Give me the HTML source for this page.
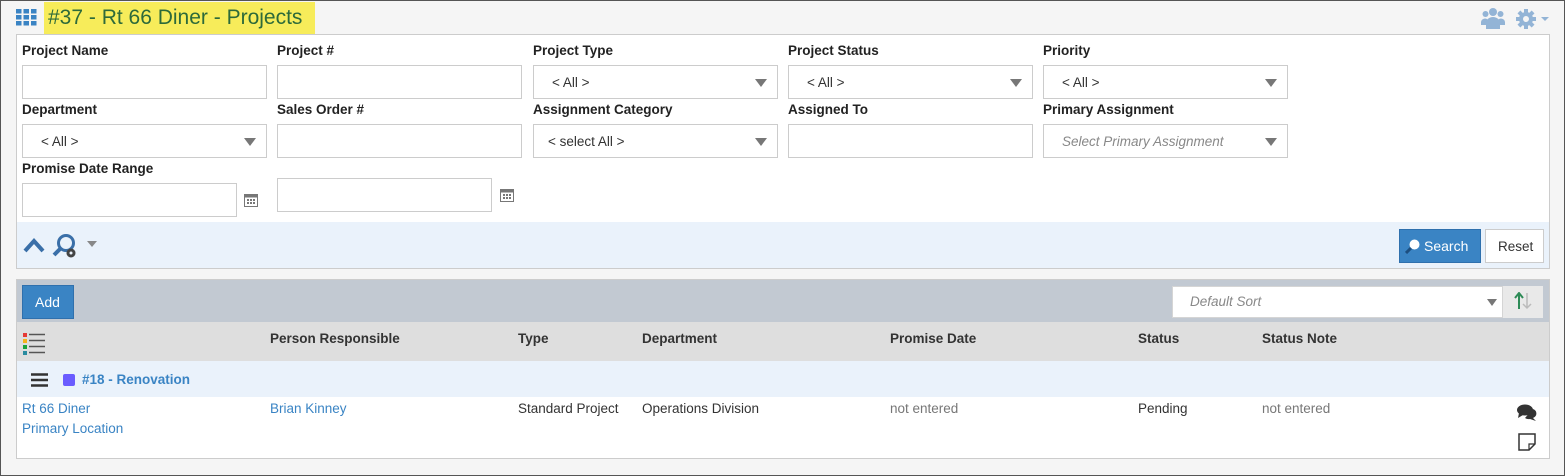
<!DOCTYPE html>
<html><head><style>
*{box-sizing:border-box;margin:0;padding:0}
body{width:1565px;height:476px;background:#f5f5f5;font-family:"Liberation Sans",sans-serif;font-size:14px;color:#333;position:relative;overflow:hidden}
.abs{position:absolute}
.lbl{position:absolute;font-weight:bold;font-size:13.5px;color:#222}
.inp{position:absolute;width:245px;height:34px;border:1px solid #ccc;background:#fff}
.sel:after{content:"";position:absolute;right:10px;top:13px;border-left:6px solid transparent;border-right:6px solid transparent;border-top:8px solid #777}
.sel span{position:absolute;left:18px;top:9px;font-size:13.5px;color:#333}
.hd{position:absolute;top:331px;font-weight:bold;font-size:13.5px;color:#333}
.cell{position:absolute;top:401px;font-size:13.5px;color:#333}
a{color:#3a84c4;text-decoration:none}
</style></head><body>
<div class="abs" style="left:0;top:0;width:1565px;height:476px;border:1px solid #555;z-index:5;pointer-events:none"></div>
<svg class="abs" style="left:16px;top:9px" width="21" height="17"><g fill="#3a84c4"><rect x="0" y="0" width="5.5" height="4.5"/><rect x="7.5" y="0" width="5.5" height="4.5"/><rect x="15" y="0" width="5.5" height="4.5"/><rect x="0" y="6" width="5.5" height="4.5"/><rect x="7.5" y="6" width="5.5" height="4.5"/><rect x="15" y="6" width="5.5" height="4.5"/><rect x="0" y="12" width="5.5" height="4.5"/><rect x="7.5" y="12" width="5.5" height="4.5"/><rect x="15" y="12" width="5.5" height="4.5"/></g></svg>
<div class="abs" style="left:44px;top:2px;height:32px;width:271px;background:#f7ec5a;color:#2d6a3a;font-size:21px;padding:4px 0 0 4px">#37 - Rt 66 Diner - Projects</div>
<svg class="abs" style="left:1481px;top:7px" width="24" height="22"><g fill="#93b4d6"><circle cx="12" cy="5" r="4"/><circle cx="4.5" cy="7" r="3"/><circle cx="19.5" cy="7" r="3"/><path d="M5 22v-6a7 6 0 0 1 14 0v6z"/><path d="M0 18v-3a4 4 0 0 1 7-2v5z"/><path d="M24 18v-3a4 4 0 0 0-7-2v5z"/></g></svg>
<svg class="abs" style="left:1516px;top:9px" width="20" height="20"><g fill="#93b4d6"><circle cx="10" cy="10" r="7"/><rect x="8" y="0" width="4" height="20"/><rect x="0" y="8" width="20" height="4"/><rect x="8" y="0" width="4" height="20" transform="rotate(45 10 10)"/><rect x="8" y="0" width="4" height="20" transform="rotate(-45 10 10)"/></g><circle cx="10" cy="10" r="3" fill="#f5f5f5"/></svg>
<div class="abs" style="left:1541px;top:17px;border-left:4px solid transparent;border-right:4px solid transparent;border-top:4px solid #93b4d6"></div>

<div class="abs" style="left:16px;top:34px;width:1534px;height:235px;background:#fff;border:1px solid #ccc"></div>
<div class="abs" style="left:17px;top:222px;width:1532px;height:46px;background:#eaf2fb"></div>

<div class="lbl" style="left:22px;top:43px">Project Name</div>
<div class="lbl" style="left:277px;top:43px">Project #</div>
<div class="lbl" style="left:533px;top:43px">Project Type</div>
<div class="lbl" style="left:788px;top:43px">Project Status</div>
<div class="lbl" style="left:1043px;top:43px">Priority</div>
<div class="inp" style="left:22px;top:65px"></div>
<div class="inp" style="left:277px;top:65px"></div>
<div class="inp sel" style="left:533px;top:65px"><span>&lt; All &gt;</span></div>
<div class="inp sel" style="left:788px;top:65px"><span>&lt; All &gt;</span></div>
<div class="inp sel" style="left:1043px;top:65px"><span>&lt; All &gt;</span></div>

<div class="lbl" style="left:22px;top:102px">Department</div>
<div class="lbl" style="left:277px;top:102px">Sales Order #</div>
<div class="lbl" style="left:533px;top:102px">Assignment Category</div>
<div class="lbl" style="left:788px;top:102px">Assigned To</div>
<div class="lbl" style="left:1043px;top:102px">Primary Assignment</div>
<div class="inp sel" style="left:22px;top:124px"><span>&lt; All &gt;</span></div>
<div class="inp" style="left:277px;top:124px"></div>
<div class="inp sel" style="left:533px;top:124px"><span style="left:14px">&lt; select All &gt;</span></div>
<div class="inp" style="left:788px;top:124px"></div>
<div class="inp sel" style="left:1043px;top:124px"><span style="color:#888;font-style:italic">Select Primary Assignment</span></div>

<div class="lbl" style="left:22px;top:161px">Promise Date Range</div>
<div class="inp" style="left:22px;top:183px;width:215px"></div>
<div class="inp" style="left:277px;top:178px;width:215px"></div>
<svg class="abs" style="left:244px;top:193px" width="14" height="14"><rect x="0.5" y="1.5" width="13" height="12" fill="none" stroke="#777"/><rect x="0.5" y="1.5" width="13" height="3" fill="#777"/><g fill="#777"><rect x="3" y="6" width="2" height="2"/><rect x="6" y="6" width="2" height="2"/><rect x="9" y="6" width="2" height="2"/><rect x="3" y="9" width="2" height="2"/><rect x="6" y="9" width="2" height="2"/><rect x="9" y="9" width="2" height="2"/></g></svg>
<svg class="abs" style="left:500px;top:188px" width="14" height="14"><rect x="0.5" y="1.5" width="13" height="12" fill="none" stroke="#777"/><rect x="0.5" y="1.5" width="13" height="3" fill="#777"/><g fill="#777"><rect x="3" y="6" width="2" height="2"/><rect x="6" y="6" width="2" height="2"/><rect x="9" y="6" width="2" height="2"/><rect x="3" y="9" width="2" height="2"/><rect x="6" y="9" width="2" height="2"/><rect x="9" y="9" width="2" height="2"/></g></svg>

<svg class="abs" style="left:23px;top:237px" width="22" height="16"><path d="M2 14L11 4L20 14" fill="none" stroke="#3a6fa8" stroke-width="4"/></svg>
<svg class="abs" style="left:52px;top:233px" width="28" height="28"><circle cx="14" cy="10" r="7.5" fill="none" stroke="#3a6fa8" stroke-width="3"/><path d="M9 15L2 22" stroke="#3a6fa8" stroke-width="4"/><circle cx="19" cy="20" r="4.5" fill="#444"/><circle cx="19" cy="20" r="1.5" fill="#eaf2fb"/></svg>
<div class="abs" style="left:87px;top:241px;border-left:5px solid transparent;border-right:5px solid transparent;border-top:6px solid #888"></div>
<div class="abs" style="left:1399px;top:229px;width:82px;height:34px;background:#3a84c4;border:1px solid #2f70ad;color:#fff;font-size:14px;padding:8px 0 0 24px">Search</div>
<svg class="abs" style="left:1405px;top:238px" width="16" height="16"><circle cx="9.5" cy="6.5" r="5" fill="#fff"/><path d="M6 10L1 15" stroke="#1d4f80" stroke-width="3"/></svg>
<div class="abs" style="left:1485px;top:229px;width:59px;height:34px;background:#fff;border:1px solid #ccc;font-size:13.5px;padding:9px 0 0 12px">Reset</div>

<div class="abs" style="left:16px;top:279px;width:1534px;height:180px;background:#fff;border:1px solid #ccc"></div>
<div class="abs" style="left:17px;top:280px;width:1532px;height:42px;background:#c2c9d2"></div>
<div class="abs" style="left:22px;top:285px;width:52px;height:34px;background:#3a84c4;border:1px solid #2f70ad;color:#fff;font-size:14px;padding:8px 0 0 12px">Add</div>
<div class="abs" style="left:1172px;top:286px;width:331px;height:32px;background:#fff;border:1px solid #d5d5d5"><span style="position:absolute;left:17px;top:7px;color:#888;font-style:italic;font-size:13.5px">Default Sort</span></div>
<div class="abs" style="left:1487px;top:299px;border-left:5px solid transparent;border-right:5px solid transparent;border-top:7px solid #777"></div>
<div class="abs" style="left:1503px;top:286px;width:40px;height:32px;background:#e9e9e9"></div>
<svg class="abs" style="left:1514px;top:292px" width="20" height="18"><path d="M5 17V2M1 6L5 1L9 6" fill="none" stroke="#2e8b57" stroke-width="2"/><path d="M13 1V16M9 12L13 16L17 12" fill="none" stroke="#bbb" stroke-width="1.5"/></svg>

<div class="abs" style="left:17px;top:322px;width:1532px;height:39px;background:#dedede"></div>
<svg class="abs" style="left:23px;top:333px" width="22" height="22"><rect x="0" y="0" width="4" height="4" fill="#e53935"/><rect x="0" y="6" width="4" height="4" fill="#f6b21b"/><rect x="0" y="12" width="4" height="4" fill="#1aa33a"/><rect x="0" y="18" width="4" height="4" fill="#2a8ca0"/><g stroke="#555" stroke-width="1.5"><path d="M6 1.5H22M6 7.5H22M6 13.5H22M6 19.5H22"/></g></svg>
<div class="hd" style="left:270px">Person Responsible</div>
<div class="hd" style="left:518px">Type</div>
<div class="hd" style="left:642px">Department</div>
<div class="hd" style="left:890px">Promise Date</div>
<div class="hd" style="left:1138px">Status</div>
<div class="hd" style="left:1262px">Status Note</div>

<div class="abs" style="left:17px;top:361px;width:1532px;height:36px;background:#eaf2fb"></div>
<svg class="abs" style="left:31px;top:373px" width="17" height="14"><g stroke="#333" stroke-width="2.5"><path d="M0 1.5H17M0 7H17M0 12.5H17"/></g></svg>
<div class="abs" style="left:63px;top:374px;width:12px;height:12px;background:#6a5cff;border-radius:2px"></div>
<div class="abs" style="left:82px;top:372px;font-weight:bold;font-size:13.5px;color:#3a84c4">#18 - Renovation</div>

<div class="cell" style="left:22px;line-height:20px;top:399px"><a>Rt 66 Diner</a><br><a>Primary Location</a></div>
<div class="cell" style="left:270px"><a>Brian Kinney</a></div>
<div class="cell" style="left:518px">Standard Project</div>
<div class="cell" style="left:642px">Operations Division</div>
<div class="cell" style="left:890px;color:#777">not entered</div>
<div class="cell" style="left:1138px">Pending</div>
<div class="cell" style="left:1262px;color:#777">not entered</div>
<svg class="abs" style="left:1517px;top:404px" width="21" height="17"><ellipse cx="8" cy="6" rx="8" ry="5.5" fill="#333"/><path d="M2 9L1 14L6 11z" fill="#333"/><path d="M16 5a6 5 0 0 1 0 9l3 3l-6-2a6 5 0 0 1-5-1" fill="#333"/></svg>
<svg class="abs" style="left:1518px;top:433px" width="18" height="18"><path d="M1 1H17V11L11 17H1z" fill="none" stroke="#333" stroke-width="1.5"/><path d="M11 17V11H17" fill="none" stroke="#333" stroke-width="1.2"/></svg>
</body></html>
